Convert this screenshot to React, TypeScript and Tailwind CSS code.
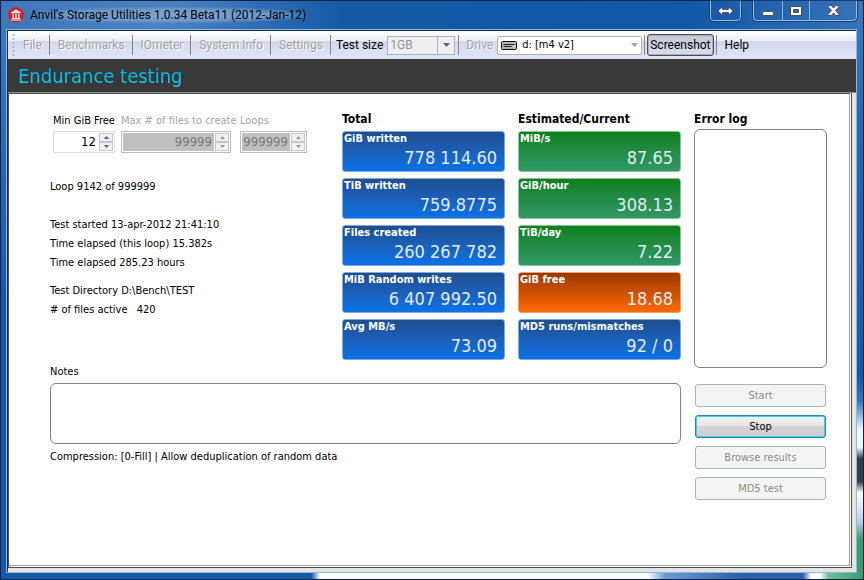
import clsx from "clsx"
import type { ReactNode } from "react"

type Tone = "blue" | "green" | "orange"

const tones: Record<Tone, string> = {
  blue: "border-[#7fa9dc] from-[#1f4e8f] to-[#0a72e6]",
  green: "border-[#86c49c] from-[#0f801b] to-[#329766]",
  orange: "border-[#f0a070] from-[#9c3800] to-[#ff6a05]",
}

const totals: { label: string; value: string; tone: Tone }[] = [
  { label: "GiB written", value: "778 114.60", tone: "blue" },
  { label: "TiB written", value: "759.8775", tone: "blue" },
  { label: "Files created", value: "260 267 782", tone: "blue" },
  { label: "MiB Random writes", value: "6 407 992.50", tone: "blue" },
  { label: "Avg MB/s", value: "73.09", tone: "blue" },
]

const current: { label: string; value: string; tone: Tone }[] = [
  { label: "MiB/s", value: "87.65", tone: "green" },
  { label: "GiB/hour", value: "308.13", tone: "green" },
  { label: "TiB/day", value: "7.22", tone: "green" },
  { label: "GiB free", value: "18.68", tone: "orange" },
  { label: "MD5 runs/mismatches", value: "92 / 0", tone: "blue" },
]

const menu = ["File", "Benchmarks", "IOmeter", "System Info", "Settings"]

function AppIcon() {
  return (
    <svg width="16" height="16" viewBox="0 0 16 16" aria-hidden="true">
      <circle cx="8" cy="8" r="7.8" fill="#e01b22" />
      <path d="M8 2.6 12.8 5.2V6.2H3.2V5.2Z" fill="#fff" />
      <path d="M4.6 6.8h1.3v4.2H4.6zM7.3 6.8h1.4v4.2H7.3zM10.1 6.8h1.3v4.2h-1.3z" fill="#fff" />
      <path d="M3.8 11h8.4v1.1H3.8zM3 12.5h10v.9H3z" fill="#fff" />
    </svg>
  )
}

function CaptionButton({ label, className, children }: { label: string; className?: string; children: ReactNode }) {
  return (
    <button type="button" aria-label={label} className={clsx("flex h-full items-center justify-center", className)}>
      {children}
    </button>
  )
}

function TitleBar() {
  return (
    <header className="flex h-7 items-start pl-[7px]">
      <div className="flex h-full items-center gap-[6px]">
        <AppIcon />
        <h1 className="bg-[radial-gradient(ellipse_at_center,#7fa5d0_0%,#6f99ca_50%,transparent_78%)] text-xs text-black [font-family:Roboto,sans-serif]">
          Anvil's Storage Utilities 1.0.34 Beta11 (2012-Jan-12)
        </h1>
      </div>
      <div className="ml-auto flex h-5 gap-3">
        <div className="flex w-[31px] rounded-b-[4px] border border-t-0 border-[#9dbfe3] outline outline-[#143e73]">
          <CaptionButton label="Move to other monitor" className="flex-1">
            <svg width="17" height="10" viewBox="0 0 17 10">
              <path d="M1 5 5.500 .8v2.600h6V.8L16 5l-4.500 4.200V6.600h-6v2.600Z" fill="#fff" stroke="#4a4f5c" />
            </svg>
          </CaptionButton>
        </div>
        <div className="flex w-[104px] rounded-b-[4px] border border-t-0 border-[#9dbfe3] outline outline-[#143e73]">
          <CaptionButton label="Minimize" className="w-[29px] border-r border-[#8fb3dc]">
            <svg width="12" height="12" viewBox="0 0 12 12">
              <path d="M.5 6.500h11v4H.5Z" fill="#fff" stroke="#4a4f5c" />
            </svg>
          </CaptionButton>
          <CaptionButton label="Maximize" className="w-[27px] border-r border-[#8fb3dc]">
            <svg width="12" height="10" viewBox="0 0 12 10">
              <path d="M.5.5h11v9H.5Z" fill="#fff" stroke="#4a4f5c" />
              <path d="M3.500 3.500h5v3h-5Z" fill="#3a6ead" stroke="#4a4f5c" />
            </svg>
          </CaptionButton>
          <CaptionButton label="Close" className="flex-1">
            <svg width="13" height="11" viewBox="0 0 13 11">
              <path
                d="M1 .5h3.200L6.500 3 8.800.5H12v1L8.600 5.500 12 9.500v1H8.800L6.500 8l-2.300 2.500H1v-1l3.400-4L1 1.500Z"
                fill="#fff"
                stroke="#4a4f5c"
              />
            </svg>
          </CaptionButton>
        </div>
      </div>
    </header>
  )
}

function Separator() {
  return <span className="h-5 w-px shrink-0 bg-[#80838f]" />
}

function Toolbar() {
  return (
    <nav className="flex h-[29px] items-center border-t border-[#0d2c52] bg-[linear-gradient(#ffffff_0%,#eceef8_35%,#d3d8ed_36%,#e0e5f6_100%)] text-xs [font-family:Roboto,sans-serif]">
      <svg width="3" height="22" viewBox="0 0 3 22" className="ml-1" aria-hidden="true">
        <path d="M1.500 0v22" stroke="#b4b8c6" strokeWidth="2" strokeDasharray="2 2" />
      </svg>
      {menu.map((item) => (
        <div key={item} className="flex items-center">
          <button type="button" disabled className="pr-[7px] pl-2 text-[#a3a3a6] [text-shadow:1px_1px_0_#fff]">
            {item}
          </button>
          <Separator />
        </div>
      ))}
      <label htmlFor="size" className="pr-1 pl-[5px]">
        Test size
      </label>
      <div className="relative mr-[3px]">
        <select
          id="size"
          disabled
          className="block h-[19px] w-[68px] appearance-none border border-[#a3b4cb] bg-[#efefef] px-[2px] leading-4 text-[#8b95a4] opacity-100"
        >
          <option>1GB</option>
        </select>
        <span className="pointer-events-none absolute inset-y-0 right-0 flex w-[18px] items-center justify-center border border-[#a3b4cb]">
          <svg width="7" height="4" viewBox="0 0 7 4">
            <path d="M0 0h7L3.500 4Z" fill="#5a6580" />
          </svg>
        </span>
      </div>
      <Separator />
      <label htmlFor="drive" className="pr-1 pl-[7px] text-[#a3a3a6] [text-shadow:1px_1px_0_#fff]">
        Drive
      </label>
      <div className="relative mr-[2px]">
        <select
          id="drive"
          className="block h-[19px] w-[145px] appearance-none rounded-[2px] border border-[#b0b0b4] bg-white pl-6 text-[11px] leading-4 text-black [font-family:'DejaVu_Sans_Condensed',sans-serif]"
        >
          <option>d: [m4 v2]</option>
        </select>
        <span className="pointer-events-none absolute inset-0 flex items-center justify-between pr-1 pl-1">
          <svg width="16" height="9" viewBox="0 0 16 9">
            <rect x=".5" y=".5" width="15" height="8" rx="1" fill="#b5b5b5" stroke="#111" />
            <path d="M2.500 3.500h11M2.500 5.500h8" stroke="#222" />
            <path d="M12 5.500h2" stroke="#fff" />
          </svg>
          <svg width="7" height="4" viewBox="0 0 7 4">
            <path d="M0 0h7L3.500 4Z" fill="#a5a5a5" />
          </svg>
        </span>
      </div>
      <Separator />
      <button
        type="button"
        className="mx-[2px] h-[22px] rounded-[3px] border border-[#4c4c52] bg-[linear-gradient(#c4c8d6,#d9ddec)] px-[2px] shadow-[inset_0_0_0_1px_#a9acb9]"
      >
        Screenshot
      </button>
      <Separator />
      <button type="button" className="px-2">
        Help
      </button>
    </nav>
  )
}

function Spinner({ id, label, value, disabled, className }: { id: string; label: string; value: string; disabled?: boolean; className: string }) {
  const arrow = disabled ? "#9a9a9a" : "#4560a8"
  return (
    <div className={className}>
      <label htmlFor={id} className={clsx("block whitespace-nowrap", disabled && "text-[#a5a5a5]")}>
        {label}
      </label>
      <div className={clsx("mt-[3px] flex h-[22px] border p-[1px]", disabled ? "border-[#bdbdbd]" : "border-[#dfe2ea]")}>
        <input
          id={id}
          type="text"
          inputMode="numeric"
          defaultValue={value}
          disabled={disabled}
          className={clsx("w-0 flex-1 pr-[2px] text-right text-[13px]", disabled ? "bg-[#bfbfbf] text-[#787878]" : "bg-white text-black")}
        />
        <div className="ml-px flex w-[14px] flex-col">
          <button type="button" aria-label={`Increase ${label}`} disabled={disabled} className="flex flex-1 items-center justify-center border border-[#c6c6cc] bg-[#f0f0f2]">
            <svg width="5" height="3" viewBox="0 0 5 3">
              <path d="M0 3h5L2.500 0Z" fill={arrow} />
            </svg>
          </button>
          <button type="button" aria-label={`Decrease ${label}`} disabled={disabled} className="flex flex-1 items-center justify-center border border-[#c6c6cc] bg-[#f0f0f2]">
            <svg width="5" height="3" viewBox="0 0 5 3">
              <path d="M0 0h5L2.500 3Z" fill={arrow} />
            </svg>
          </button>
        </div>
      </div>
    </div>
  )
}

function TileColumn({ title, items }: { title: string; items: typeof totals }) {
  return (
    <section className="w-[163px] shrink-0">
      <h3 className="text-xs leading-4 font-bold">{title}</h3>
      <div className="mt-1 flex flex-col gap-[6px]">
        {items.map((item) => (
          <div key={item.label} className={clsx("h-[41px] rounded-[3px] border bg-linear-to-b px-px text-white", tones[item.tone])}>
            <p className="leading-[14px] font-bold">{item.label}</p>
            <p className="pr-[6px] text-right text-lg leading-6 text-[#e3ecf5]">{item.value}</p>
          </div>
        ))}
      </div>
    </section>
  )
}

function ActionButton({ active, children }: { active?: boolean; children: ReactNode }) {
  return (
    <button
      type="button"
      disabled={!active}
      className={clsx(
        "h-[23px] rounded-[3px] border",
        active
          ? "border-[#2f7fb0] bg-[linear-gradient(#f2f2f2_0%,#e6e6e6_48%,#d4d4d4_50%,#cfcfcf_100%)] shadow-[inset_0_0_0_1px_#3fcdf5]"
          : "border-[#adb2b5] bg-[#f4f4f4] text-[#8a8a8a]",
      )}
    >
      {children}
    </button>
  )
}

export default function App() {
  return (
    <div className="flex min-h-screen flex-col border border-[#0a2344] bg-[linear-gradient(90deg,#1559a6_0%,#1559a6_36%,#ffffff_37%,#ffffff_75%,#6f9bd0_77%,#2b5fa8_86%,#2b5fa8_93%,#ffffff_94%,#ffffff_95%,#6fbf9a_96%,#3a9b6e_100%)] text-[11px] leading-[14px] text-black [font-family:'DejaVu_Sans_Condensed',sans-serif]">
      <div className="mb-[6px] flex flex-1 flex-col bg-[linear-gradient(#3a78bb_0%,#2a69b2_20%,#1559a6_66%,#3a74b8_70%,#eefaff_75%,#eefaff_78%,#333c44_80%,#333c44_84%,#ffffff_86%,#c0cfe4_91%,#3a9b6e_94%,#3a9b6e_100%)]">
        <div className="mr-[6px] flex flex-1 flex-col bg-[linear-gradient(90deg,#3f78ba_0%,#4a82c1_20%,#1559a6_40%,#1157a6_80%,#3571b6_100%)] bg-[length:100%_28px] bg-no-repeat">
          <TitleBar />
          <div className="flex flex-1 bg-[linear-gradient(#3a78bb,#1559a6_50%)] bg-[length:7px_100%] bg-no-repeat pl-[5px]">
            <div className="flex min-w-0 flex-1 flex-col border border-[#8fb6dd] bg-[#e4e4e4]">
              <div className="flex flex-1 flex-col border-l border-[#1c2f47]">
                <Toolbar />
                <h2 className="flex h-[34px] items-center border-b border-[#8c8c8c] bg-[#383838] px-[10px] text-xl">
                  <span className="bg-linear-to-b from-[#0a9af5] to-[#12e6ee] bg-clip-text text-transparent">Endurance testing</span>
                </h2>
                <main className="mr-[4px] mb-[4px] flex flex-1 flex-col border border-t-0 border-[#505050] bg-white pr-px pb-px">
                  <div className="flex flex-1 items-start gap-[13px] border-t border-r border-b border-t-[#505050] border-r-[#9c9c9c] border-b-[#9c9c9c] pt-[17px] pr-[22px] pb-4 pl-[41px]">
                    <div className="min-w-0 flex-1">
                      <div className="flex gap-[13px]">
                        <div className="min-w-0 flex-1">
                          <div className="flex pt-[3px] pl-[3px]">
                            <Spinner id="minfree" label="Min GiB Free" value="12" className="mr-[6px] w-[62px]" />
                            <Spinner id="maxfiles" label="Max # of files to create" value="99999" disabled className="mr-[9px] w-[110px]" />
                            <Spinner id="loops" label="Loops" value="999999" disabled className="w-[67px]" />
                          </div>
                          <p className="mt-[27px]">Loop 9142 of 999999</p>
                          <div className="mt-6 flex flex-col gap-[5px]">
                            <p>Test started 13-apr-2012 21:41:10</p>
                            <p>Time elapsed (this loop) 15.382s</p>
                            <p>Time elapsed 285.23 hours</p>
                          </div>
                          <div className="mt-[14px] flex flex-col gap-[5px]">
                            <p>Test Directory D:\Bench\TEST</p>
                            <p>
                              # of files active <span className="pl-[6px]">420</span>
                            </p>
                          </div>
                        </div>
                        <TileColumn title="Total" items={totals} />
                        <TileColumn title="Estimated/Current" items={current} />
                      </div>
                      <label htmlFor="notes" className="mt-[5px] block">
                        Notes
                      </label>
                      <textarea id="notes" className="mt-1 block h-[61px] w-full resize-none rounded-[6px] border border-[#828282] bg-white p-1" />
                      <p className="mt-[6px]">Compression: [0-Fill] | Allow deduplication of random data</p>
                    </div>
                    <aside className="flex w-[133px] shrink-0 flex-col">
                      <label htmlFor="errors" className="text-xs leading-4 font-bold">
                        Error log
                      </label>
                      <textarea id="errors" readOnly className="mt-[2px] block h-[239px] resize-none rounded-[6px] border border-[#828282] bg-white p-1" />
                      <div className="mt-4 flex flex-col gap-2 px-px">
                        <ActionButton>Start</ActionButton>
                        <ActionButton active>Stop</ActionButton>
                        <ActionButton>Browse results</ActionButton>
                        <ActionButton>MD5 test</ActionButton>
                      </div>
                    </aside>
                  </div>
                </main>
              </div>
            </div>
          </div>
        </div>
      </div>
    </div>
  )
}
